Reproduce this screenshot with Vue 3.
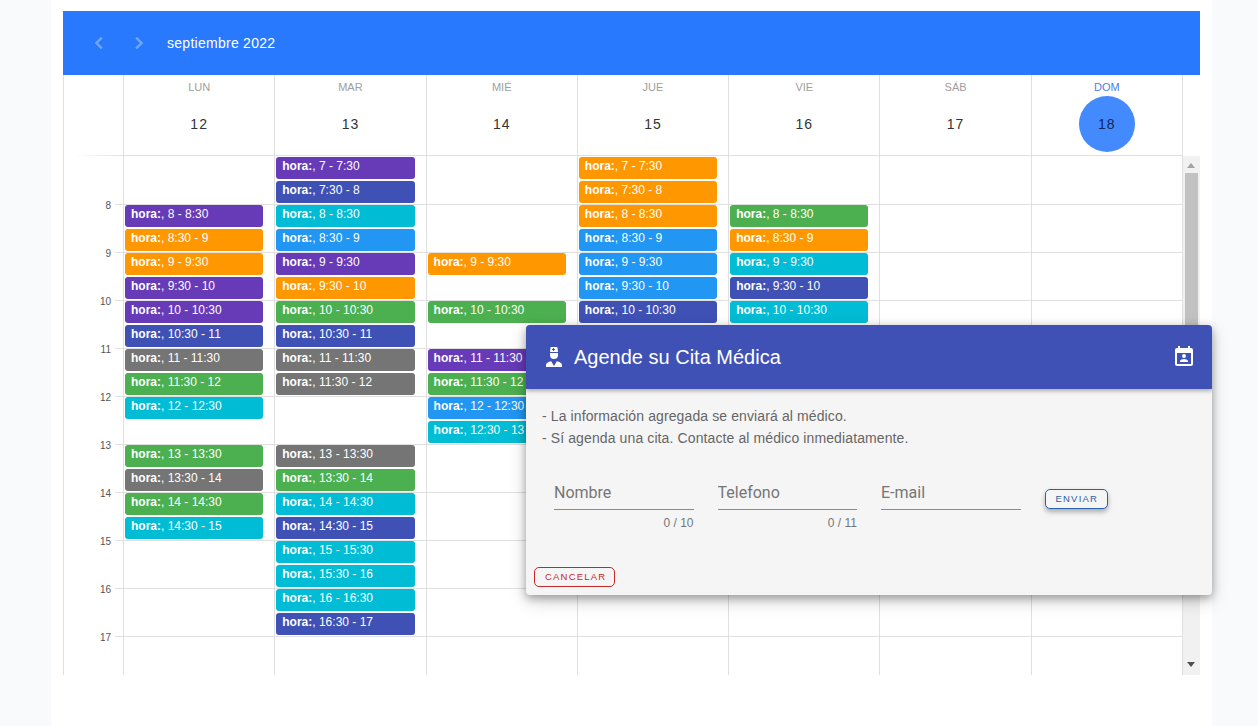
<template>
  <div class="page">
    <div class="sheet">
      <div class="calendar">
        <div class="toolbar">
          <button class="nav-btn" type="button" aria-label="Anterior">
            <svg viewBox="0 0 24 24" width="24" height="24"><path d="M15.41 16.58 10.83 12l4.58-4.59L14 6l-6 6 6 6z" /></svg>
          </button>
          <button class="nav-btn" type="button" aria-label="Siguiente">
            <svg viewBox="0 0 24 24" width="24" height="24"><path d="M8.59 16.58 13.17 12 8.59 7.41 10 6l6 6-6 6z" /></svg>
          </button>
          <span class="month">septiembre 2022</span>
        </div>

        <div class="head">
          <div class="head-gutter"></div>
          <div v-for="day in days" :key="day.name" class="head-day" :class="{ today: day.today }">
            <div class="weekday">{{ day.name }}</div>
            <div class="daynum">{{ day.num }}</div>
          </div>
          <div class="head-spacer"></div>
        </div>

        <div class="body">
          <div class="gutter">
            <div v-for="h in hours" :key="h" class="hour-cell">
              <span v-if="h > 7" class="hour-label">{{ h }}</span>
            </div>
          </div>
          <div v-for="day in days" :key="day.name" class="day-col">
            <div
              v-for="ev in day.events"
              :key="ev.slot"
              class="event"
              :class="ev.color"
              :style="{ gridRow: ev.slot + 1 }"
            >
              <strong>hora:</strong>, {{ slotLabel(ev.slot) }}
            </div>
          </div>
          <div class="scrollbar">
            <span class="arrow up"></span>
            <div class="thumb"></div>
            <span class="arrow down"></span>
          </div>
        </div>
      </div>
    </div>

    <div class="dialog">
      <div class="dialog-head">
        <svg class="head-icon" viewBox="0 0 24 24" width="24" height="24">
          <path d="M14.84,16.26C17.86,16.83 20,18.29 20,20V22H4V20C4,18.29 6.14,16.83 9.16,16.26L12,21L14.84,16.26M8,8H16V10A4,4 0 0,1 12,14A4,4 0 0,1 8,10V8M8,7L8.41,2.9C8.46,2.39 8.89,2 9.41,2H14.6C15.11,2 15.54,2.39 15.59,2.9L16,7H8M12,3H11V4H10V5H11V6H12V5H13V4H12V3Z" />
        </svg>
        <span class="dialog-title">Agende su Cita Médica</span>
        <svg class="head-icon right" viewBox="0 0 24 24" width="24" height="24">
          <path d="M19 3h-1V1h-2v2H8V1H6v2H5c-1.1 0-2 .9-2 2v14c0 1.1.9 2 2 2h14c1.1 0 2-.9 2-2V5c0-1.1-.9-2-2-2zm0 16H5V8h14v11zM12 9a2 2 0 1 1 0 4 2 2 0 0 1 0-4zm4 8H8v-1c0-1.33 2.67-2 4-2s4 .67 4 2v1z" />
        </svg>
      </div>
      <div class="dialog-text">
        <p>- La información agregada se enviará al médico.</p>
        <p>- Sí agenda una cita. Contacte al médico inmediatamente.</p>
      </div>
      <div class="form-row">
        <div v-for="f in fields" :key="f.label" class="field">
          <input class="field-input" type="text" :placeholder="f.label" />
          <div class="counter">{{ f.counter }}</div>
        </div>
        <button class="btn send" type="button">Enviar</button>
      </div>
      <div class="dialog-actions">
        <button class="btn cancel" type="button">Cancelar</button>
      </div>
    </div>
  </div>
</template>

<script setup>
const hours = [7, 8, 9, 10, 11, 12, 13, 14, 15, 16, 17];

const fields = [
  { label: "Nombre", counter: "0 / 10" },
  { label: "Telefono", counter: "0 / 11" },
  { label: "E-mail", counter: "" },
];

function evs(list) {
  return list.map(([slot, color]) => ({ slot, color }));
}

const days = [
  {
    name: "LUN",
    num: 12,
    events: evs([
      [2, "purple"], [3, "orange"], [4, "orange"], [5, "purple"], [6, "purple"], [7, "indigo"],
      [8, "grey"], [9, "green"], [10, "cyan"], [12, "green"], [13, "grey"], [14, "green"], [15, "cyan"],
    ]),
  },
  {
    name: "MAR",
    num: 13,
    events: evs([
      [0, "purple"], [1, "indigo"], [2, "cyan"], [3, "blue"], [4, "purple"], [5, "orange"],
      [6, "green"], [7, "indigo"], [8, "grey"], [9, "grey"], [12, "grey"], [13, "green"],
      [14, "cyan"], [15, "indigo"], [16, "cyan"], [17, "cyan"], [18, "cyan"], [19, "indigo"],
    ]),
  },
  {
    name: "MIÉ",
    num: 14,
    events: evs([[4, "orange"], [6, "green"], [8, "purple"], [9, "green"], [10, "blue"], [11, "cyan"]]),
  },
  {
    name: "JUE",
    num: 15,
    events: evs([
      [0, "orange"], [1, "orange"], [2, "orange"], [3, "blue"], [4, "blue"], [5, "blue"], [6, "indigo"],
    ]),
  },
  {
    name: "VIE",
    num: 16,
    events: evs([[2, "green"], [3, "orange"], [4, "cyan"], [5, "indigo"], [6, "cyan"]]),
  },
  { name: "SÁB", num: 17, events: [] },
  { name: "DOM", num: 18, today: true, events: [] },
];

function timeAt(slot) {
  const h = 7 + Math.floor(slot / 2);
  return slot % 2 ? h + ":30" : String(h);
}

function slotLabel(slot) {
  return timeAt(slot) + " - " + timeAt(slot + 1);
}
</script>

<style>
html,
body {
  margin: 0;
  background: #f8fafc;
}
</style>

<style scoped>
.page {
  position: relative;
  height: 726px;
  overflow: hidden;
  font-family: Roboto, "Liberation Sans", sans-serif;
  background: #f8fafc;
}

.sheet {
  width: 1137px;
  height: 726px;
  margin-left: 51px;
  padding: 11px 12px 0;
  background: #fff;
}

.calendar {
  width: 1137px;
}

.toolbar {
  display: flex;
  align-items: center;
  height: 64px;
  padding-left: 24px;
  background: #2979ff;
}

.nav-btn {
  width: 24px;
  height: 24px;
  padding: 0;
  margin-right: 16px;
  border: 0;
  background: none;
}

.nav-btn svg {
  display: block;
  fill: rgba(255, 255, 255, 0.32);
  stroke: rgba(255, 255, 255, 0.32);
  stroke-width: 0.4;
}

.month {
  font-family: "Liberation Sans", sans-serif;
  font-size: 14px;
  letter-spacing: 0.27px;
  color: #fff;
}

.head {
  display: grid;
  grid-template-columns: 60px repeat(7, 1fr) 17px;
  height: 81px;
  border-left: 1px solid #e0e0e0;
  box-sizing: border-box;
}

.head-gutter {
  border-right: 1px solid #e0e0e0;
  background: linear-gradient(to right, transparent 8px, #e0e0e0 100%) bottom / 100% 1px no-repeat;
}

.head-day {
  border-right: 1px solid #e0e0e0;
  border-bottom: 1px solid #e0e0e0;
  text-align: center;
}

.weekday {
  padding-top: 6px;
  font-family: "Liberation Sans", sans-serif;
  font-size: 11px;
  line-height: 13px;
  color: #9e9e9e;
}

.today .weekday {
  color: #4a7fe8;
}

.daynum {
  width: 56px;
  height: 56px;
  margin: 2px auto 0;
  border-radius: 50%;
  font-family: "Liberation Sans", sans-serif;
  font-size: 14px;
  line-height: 56px;
  letter-spacing: 1px;
  color: #333;
}

.today .daynum {
  background: #448aff;
  color: #10265a;
}

.body {
  display: grid;
  grid-template-columns: 60px repeat(7, 1fr) 17px;
  grid-template-rows: 519px;
  height: 519px;
  overflow: hidden;
  border-left: 1px solid #e0e0e0;
  box-sizing: border-box;
}

.gutter {
  padding-top: 1px;
  border-right: 1px solid #e0e0e0;
}

.hour-cell {
  position: relative;
  height: 48px;
  box-sizing: border-box;
}

.hour-cell::after {
  content: "";
  position: absolute;
  right: 0;
  bottom: 0;
  width: 8px;
  height: 1px;
  background: #e0e0e0;
}

.hour-label {
  position: absolute;
  top: -5px;
  right: 12px;
  font-family: "Liberation Sans", sans-serif;
  font-size: 10px;
  line-height: 12px;
  color: #555;
}

.day-col {
  display: grid;
  grid-template-rows: repeat(22, 24px);
  align-content: start;
  padding: 1px 0 0 1px;
  height: 519px;
  box-sizing: border-box;
  border-right: 1px solid #e0e0e0;
  background-image: repeating-linear-gradient(
    to bottom,
    transparent 0,
    transparent 47px,
    #e0e0e0 47px,
    #e0e0e0 48px
  );
  background-position: 0 1px;
  background-repeat: no-repeat;
}

.event {
  width: calc(100% - 11px);
  height: 22px;
  box-sizing: border-box;
  padding-left: 6px;
  border-radius: 3px;
  font-family: "Liberation Sans", sans-serif;
  font-size: 12px;
  line-height: 18px;
  color: #fff;
  white-space: nowrap;
  overflow: hidden;
}

.purple { background: #673ab7; }
.indigo { background: #3f51b5; }
.cyan { background: #00bcd4; }
.blue { background: #2196f3; }
.orange { background: #ff9800; }
.green { background: #4caf50; }
.grey { background: #757575; }

.scrollbar {
  position: relative;
  display: flex;
  flex-direction: column;
  align-items: center;
  background: #f1f1f1;
}

.thumb {
  width: 13px;
  height: 300px;
  margin-top: 17px;
  background: #c1c1c1;
}

.arrow {
  position: absolute;
  left: 4px;
  width: 0;
  height: 0;
  border-left: 4px solid transparent;
  border-right: 4px solid transparent;
}

.arrow.up {
  top: 7px;
  border-bottom: 5px solid #a3a3a3;
}

.arrow.down {
  bottom: 8px;
  border-top: 5px solid #505050;
}

.dialog {
  position: absolute;
  left: 526px;
  top: 325px;
  width: 686px;
  height: 270px;
  border-radius: 4px;
  background: #f5f5f5;
  box-shadow: 0 3px 8px rgba(0, 0, 0, 0.3), 0 6px 18px rgba(0, 0, 0, 0.18);
  overflow: hidden;
}

.dialog-head {
  display: flex;
  align-items: center;
  height: 64px;
  padding: 0 16px;
  background: #3f51b5;
  box-shadow: 0 2px 4px rgba(0, 0, 0, 0.3);
  position: relative;
}

.head-icon {
  flex: none;
  fill: #fff;
}

.head-icon.right {
  margin-left: auto;
}

.dialog-title {
  margin-left: 8px;
  font-family: "Liberation Sans", sans-serif;
  font-size: 20px;
  color: #fff;
}

.dialog-text {
  padding: 16px 16px 0;
  font-family: "Liberation Sans", sans-serif;
  font-size: 14px;
  line-height: 22px;
  letter-spacing: 0.11px;
  color: #666;
}

.dialog-text p {
  margin: 0;
}

.form-row {
  display: flex;
  align-items: flex-start;
  gap: 24px;
  margin-top: 27px;
  padding-left: 28px;
}

.field {
  width: 139.5px;
}

.field-input {
  display: block;
  width: 100%;
  height: 34px;
  box-sizing: border-box;
  padding: 0;
  border: 0;
  border-bottom: 1px solid #8a8a8a;
  background: none;
  outline: none;
  font-family: inherit;
  font-size: 16px;
}

.field-input::placeholder {
  color: #757575;
  opacity: 1;
}

.counter {
  height: 14px;
  margin-top: 6px;
  font-family: "Liberation Sans", sans-serif;
  font-size: 12px;
  line-height: 14px;
  text-align: right;
  color: #757575;
}

.btn {
  display: block;
  height: 20px;
  box-sizing: border-box;
  padding: 0 10px;
  border-radius: 5px;
  background: none;
  font-family: "Liberation Sans", sans-serif;
  font-size: 9.5px;
  line-height: 18px;
  letter-spacing: 1.2px;
  text-transform: uppercase;
}

.send {
  width: 63px;
  margin-top: 13px;
  border: 1px solid #2a62a8;
  color: #2a62a8;
  background: #f5f5f5;
  box-shadow: 0 3px 5px rgba(0, 0, 0, 0.3);
}

.dialog-actions {
  position: absolute;
  left: 8px;
  bottom: 8px;
}

.cancel {
  width: 81px;
  border: 1px solid #c62828;
  color: #c62828;
}
</style>
